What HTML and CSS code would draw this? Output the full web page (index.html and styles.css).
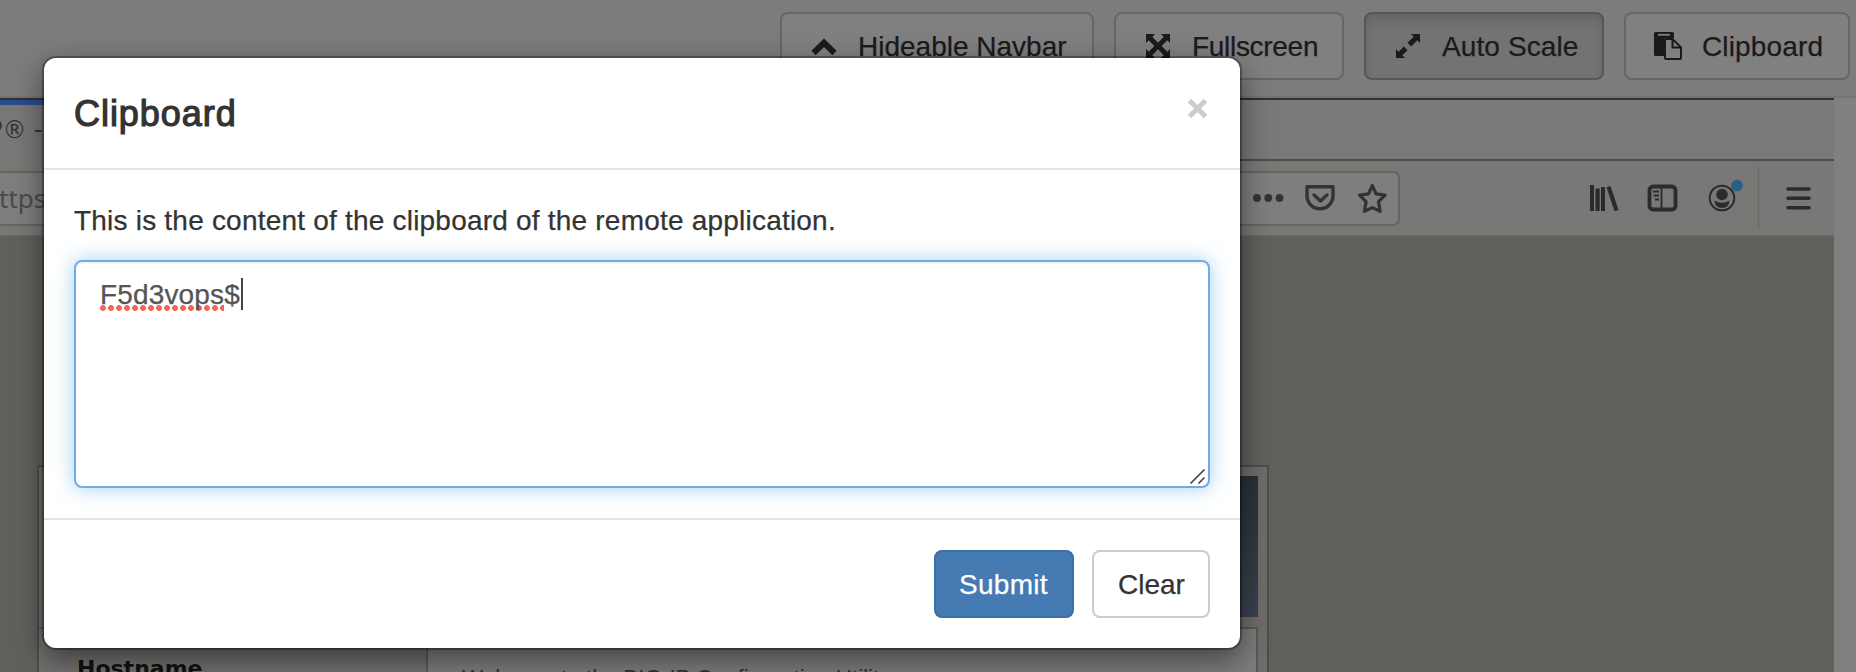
FILE: index.html
```html
<!DOCTYPE html>
<html lang="en">
<head>
<meta charset="utf-8">
<title>Clipboard</title>
<link rel="stylesheet" href="styles.css">
</head>
<body>
<div class="page">
  <nav class="navbar">
    <button class="btn nav-hide"><svg class="ico" width="28" height="28" viewBox="0 0 28 28"><path d="M3.500 21 14 10.800 24.500 21" fill="none" stroke="#1a1a1a" stroke-width="6"/></svg><span>Hideable Navbar</span></button>
    <button class="btn nav-full"><svg class="ico" width="28" height="28" viewBox="0 0 28 28"><path d="M2 2h9L8.300 4.700 14 10.700 19.700 4.700 17 2h9v9l-2.700-2.700L17.600 14l5.700 5.700L26 17v9h-9l2.700-2.700L14 17.300l-5.700 6L11 26H2v-9l2.700 2.700L10.400 14 4.700 8.300 2 11z" fill="#1a1a1a"/></svg><span>Fullscreen</span></button>
    <button class="btn nav-scale active"><svg class="ico" width="28" height="28" viewBox="0 0 28 28"><path d="M17 2h9v9l-2.700-2.700-6.100 6.200-3.700-3.700L19.700 4.700zM2 26v-9l2.700 2.700 5.100-5.200 3.700 3.700-5.200 5.100L11 26z" fill="#1a1a1a"/></svg><span>Auto Scale</span></button>
    <button class="btn nav-clip"><svg class="ico" width="28" height="28" viewBox="0 0 28 28"><path d="M1.500 0h17q1.500 0 1.500 1.500V6h-8q-2 0-2 2v16H1.500Q0 24 0 22.500v-21Q0 0 1.500 0z" fill="#1a1a1a"/><path d="M4 2.800h12" stroke="#808080" stroke-width="1.800"/><path d="M12 7h6.500l8.500 8.500V26q0 1-1 1H12q-1 0-1-1V8q0-1 1-1z" fill="#808080" stroke="#1a1a1a" stroke-width="2"/><path d="M18.500 7v8.500H27" fill="none" stroke="#1a1a1a" stroke-width="2"/></svg><span>Clipboard</span></button>
  </nav>
  <main class="remote">
    <div class="tabs"><div class="tab">P® -</div></div>
    <div class="toolbar">
      <div class="urlbar">
        <span class="url">https</span>
        <svg class="url-icons" width="140" height="36" viewBox="0 0 140 36"><g fill="#333"><circle cx="6" cy="18" r="3.900"/><circle cx="17.300" cy="18" r="3.900"/><circle cx="28.500" cy="18" r="3.900"/></g><path d="M56 6.800h26v9a13 13 0 0 1-26 0zM63 15l6.500 6 6.500-6" fill="none" stroke="#333" stroke-width="3.400" stroke-linejoin="round" stroke-linecap="round"/><path d="M121.300 5.500l3.800 8.400 9 1.200-6.600 6.500 1.700 9.700-7.900-3.700-7.900 3.700 1.700-9.700-6.600-6.500 9-1.200z" fill="none" stroke="#333" stroke-width="3.200" stroke-linejoin="round"/></svg>
      </div>
      <svg class="tools" width="230" height="76" viewBox="0 0 230 76"><g fill="#2b2b2c"><path d="M2 25h4v26H2zM7.500 28.500h4.200V51H7.500zM13 27h4v24h-4zM18.500 27.300l4-1.200L30.500 50l-4 1.200z"/></g><rect x="61.500" y="26.500" width="26" height="23" rx="3.500" fill="none" stroke="#2b2b2c" stroke-width="3.800"/><path d="M73.500 26v24M65 31.500h6M65.500 35.500h5.500M67 39.500h4" stroke="#2b2b2c" stroke-width="1.800"/><circle cx="134" cy="38" r="12.300" fill="none" stroke="#2b2b2c" stroke-width="2"/><circle cx="134" cy="34.500" r="5.800" fill="#2b2b2c"/><path d="M126.500 40.500q7.500 4.500 15 0-.5 7.500-7.500 7.500t-7.500-7.500z" fill="#2b2b2c"/><circle cx="149" cy="25.500" r="5.800" fill="#285f84"/><path d="M170.500 7v62" stroke="#6a6a67" stroke-width="1.500"/><path d="M200 29h21M200 38.300h21M200 47.700h21" stroke="#2b2b2c" stroke-width="3.600" stroke-linecap="round"/></svg>
    </div>
    <div class="content">
      <div class="card">
        <div class="banner"></div>
        <div class="panel"><div class="host">Hostname</div><div class="welcome">Welcome to the BIG-IP Configuration Utility.</div></div>
      </div>
    </div>
  </main>
  <section class="modal">
    <header class="modal-head"><h1>Clipboard</h1><svg class="close" width="22" height="22" viewBox="0 0 22 22"><path d="M2.500 2.500l16 16M18.500 2.500l-16 16" stroke="#ccc" stroke-width="5"/></svg></header>
    <div class="modal-body">
      <p>This is the content of the clipboard of the remote application.</p>
      <div class="field"><span class="value"><span class="misspelt">F5d3vops</span>$</span><i class="caret"></i><svg class="grip" width="18" height="18" viewBox="0 0 18 18"><path d="M1.500 15.500l14-14M9.500 15.500l6-6" stroke="#444" stroke-width="1.700"/></svg></div>
    </div>
    <footer class="modal-foot"><button class="btn submit"><span>Submit</span></button><button class="btn clear"><span>Clear</span></button></footer>
  </section>
</div>
</body>
</html>
```
FILE: styles.css
```css
* { box-sizing: border-box; }
body { margin: 0; font: 28px/40px "Liberation Sans", Arial, sans-serif; color: #333; -webkit-text-stroke: .25px; }
.page { position: relative; width: 1856px; height: 672px; overflow: hidden; background: #808080; }
.navbar { height: 98px; padding: 12px 6px 0 0; display: flex; justify-content: flex-end; gap: 20px; background: #7c7c7c; border-bottom: 2px solid #747474; }
.btn { height: 68px; margin: 0; padding: 0 24px; display: flex; align-items: center; border: 2px solid #666; border-radius: 8px; background: #808080; font: inherit; color: #1a1a1a; white-space: nowrap; }
.btn span { padding-top: 2px; }
.ico { flex: none; margin-right: 20px; }
.nav-hide { width: 314px; padding-left: 28px; }
.nav-full { width: 230px; padding-left: 28px; letter-spacing: -.3px; }
.nav-scale { width: 240px; padding-left: 28px; letter-spacing: .1px; }
.nav-clip { width: 226px; padding-left: 28px; letter-spacing: .15px; }
.active { background: #737373; border-color: #565656; box-shadow: inset 0 6px 10px rgba(0,0,0,.125); }
.remote { width: 1834px; height: 574px; display: flex; flex-direction: column; -webkit-text-stroke: 0; }
.tabs { height: 63px; display: flex; background: #797979; border-top: 2px solid #303030; border-bottom: 2px solid #4c4c4a; }
.tab { width: 600px; height: 61px; border-top: 5px solid #2a4c8c; background: #797876; font: 24px/50px "DejaVu Sans", sans-serif; color: #333; text-indent: -12px; white-space: nowrap; }
.toolbar { height: 75px; display: flex; align-items: center; justify-content: space-between; background: #797876; border-bottom: 1px solid #6d6c68; }
.urlbar { width: 1400px; height: 55px; display: flex; align-items: center; justify-content: space-between; border: 2px solid #66645f; border-left: 0; border-radius: 0 7px 7px 0; background: #7e7e7e; }
.url { font: 26px/50px "Noto Sans", sans-serif; color: #4b4b4b; margin-left: -17px; }
.url-icons { margin-right: 7px; }
.tools { margin-right: 16px; }
.content { flex: 1; padding: 229px 0 0 37px; background: #62605d; }
.card { width: 1232px; height: 207px; padding: 9px; border: 2px solid #4e4d4b; border-bottom: 0; background: #6f6d6a; }
.banner { height: 141px; background: linear-gradient(#293037, #3b424f); }
.panel { height: 54px; margin: 10px 0 0 -9px; display: flex; border: 2px solid #5a5957; border-left: 0; background: #7c7c7c; }
.host { width: 389px; padding: 28px 0 0 38px; border-right: 2px solid #5a5957; background: #71706e; font: bold 22px/24px "DejaVu Sans", sans-serif; color: #111; }
.welcome { padding: 37px 0 0 34px; font: 22.4px/24px "Liberation Sans", Arial, sans-serif; color: #333; white-space: nowrap; }
.modal { position: absolute; left: 44px; top: 58px; width: 1196px; height: 590px; display: flex; flex-direction: column; border-radius: 12px; background: #fff; box-shadow: 0 0 0 2px rgba(0,0,0,.3), 0 10px 30px rgba(0,0,0,.5); }
.modal-head { height: 112px; padding: 30px; display: flex; justify-content: space-between; border-bottom: 2px solid #e5e5e5; }
h1 { margin: 0; font: 36px/52px "Liberation Sans", Arial, sans-serif; letter-spacing: .95px; -webkit-text-stroke: 1.2px #333; }
.close { margin: 10px 1px 0 0; }
.modal-body { height: 348px; padding: 31px 30px 29px; }
p { margin: 0 0 19px; white-space: nowrap; letter-spacing: .21px; }
.field { position: relative; height: 228px; padding: 13px 24px; display: flex; border: 2px solid #71abe5; border-radius: 8px; background: #fff; box-shadow: inset 0 2px 2px rgba(0,0,0,.05), 0 0 20px rgba(102,175,233,.6); color: #555; }
.value { line-height: 40px; letter-spacing: .15px; }
.misspelt { padding-bottom: 1px; background: radial-gradient(circle at 3px 3px, #f0685c 2.6px, transparent 3.2px) 0 100% / 8px 6px repeat-x; }
.caret { width: 2px; height: 32px; margin: 3px 0 0 1px; background: #444; }
.grip { position: absolute; right: 1px; bottom: 0; }
.modal-foot { flex: 1; padding: 30px; display: flex; justify-content: flex-end; gap: 18px; border-top: 2px solid #e5e5e5; }
.submit { width: 140px; padding-left: 23px; background: #467ab3; border-color: #3c6da4; color: #fff; letter-spacing: .3px; }
.clear { width: 118px; background: #fff; border-color: #ccc; color: #333; }
```
